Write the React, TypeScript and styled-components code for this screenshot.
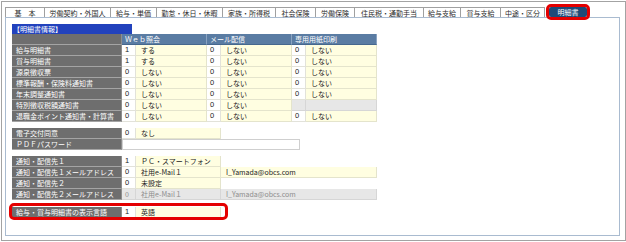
import React from "react";
import styled, { createGlobalStyle, css } from "styled-components";

const GlobalStyle = createGlobalStyle`
	html, body {
		margin: 0;
		padding: 0;
		background: #fff;
	}
	body {
		font-family: "Noto Sans CJK JP", "Noto Sans", sans-serif;
		font-size: 7px;
		color: #222;
	}
`;

const Frame = styled.div`
	box-sizing: border-box;
	width: 625px;
	height: 240px;
	margin: 1px 0 0 1px;
	border: 1px solid #a3a3a3;
	padding: 5px 0 0 3px;
`;

const TabBar = styled.div`
	display: flex;
	height: 10px;
`;

const Tab = styled.div<{ $w: number; $active?: boolean }>`
	box-sizing: border-box;
	width: ${(p) => p.$w}px;
	height: 10px;
	display: flex;
	align-items: center;
	justify-content: center;
	white-space: nowrap;
	color: #2a2a2a;
	background: #fff;
	border-top: 1px solid #a0a0a0;
	border-right: 1px solid #a0a0a0;

	&:first-child {
		border-left: 1px solid #a0a0a0;
	}

	${(p) =>
		p.$active &&
		css`
			margin-left: 4px;
			border: none;
			background: #1f4b78;
			color: #fff;
			border-radius: 2px;
			outline: 3px solid #e40000;
			outline-offset: 0;
		`}
`;

const Panel = styled.div`
	box-sizing: border-box;
	width: 615px;
	height: 219px;
	border: 1px solid #a9bbd0;
	padding: 6px 0 0 6px;
	display: flex;
	flex-direction: column;
	align-items: flex-start;
`;

const Title = styled.div`
	box-sizing: border-box;
	width: 120px;
	height: 10px;
	background: #2242bd;
	color: #fff;
	display: flex;
	align-items: center;
	padding-left: 1px;
`;

const Grid = styled.div<{ $cols: string; $gap?: number }>`
	display: grid;
	grid-template-columns: ${(p) => p.$cols};
	grid-auto-rows: 11px;
	margin-top: ${(p) => p.$gap ?? 0}px;
`;

type Tone = "label" | "head" | "code" | "value" | "off" | "blank" | "input";

const tones: Record<Tone, ReturnType<typeof css>> = {
	label: css`
		background: #6e6e6e;
		color: #fff;
		padding-left: 4px;
		border-bottom: 1px solid #a4a4a4;
		border-right: 1px solid #8e8e8e;
	`,
	head: css`
		background: #5a7ca3;
		color: #fff;
		border-right: 1px solid #8aa3c1;
		border-bottom: 1px solid #45678e;
	`,
	code: css`
		background: #fff;
		color: #222;
		font-family: "Liberation Sans", Arial, sans-serif;
		font-size: 7.5px;
		border-right: 1px solid #e2e2da;
		border-bottom: 1px solid #e2e2da;
	`,
	value: css`
		background: #fffee1;
		color: #222;
		padding-left: 5px;
		border-right: 1px solid #e4e4cc;
		border-bottom: 1px solid #e4e4cc;
	`,
	off: css`
		background: #e7e7e7;
		color: #8d8d8d;
		border-right: 1px solid #d6d6d6;
		border-bottom: 1px solid #d6d6d6;
	`,
	blank: css`
		background: transparent;
	`,
	input: css`
		background: #fff;
		border: 1px solid #cfcfcf;
	`,
};

const Cell = styled.div<{ $tone: Tone; $span?: number; $offValue?: boolean }>`
	box-sizing: border-box;
	grid-column: span ${(p) => p.$span ?? 1};
	display: flex;
	align-items: center;
	padding-left: 3px;
	white-space: nowrap;
	overflow: hidden;
	line-height: 1;
	${(p) => tones[p.$tone]}
	${(p) =>
		p.$offValue &&
		css`
			padding-left: 5px;
		`}
`;

const Highlight = styled.div`
	position: relative;
	margin-top: 7px;

	&::after {
		content: "";
		position: absolute;
		top: -4px;
		bottom: -2px;
		left: -3px;
		right: -7px;
		border: 3px solid #e40000;
		border-radius: 5px;
		pointer-events: none;
	}
`;

type Pair = [number, string] | null;

interface IDoc {
	label: string;
	web: Pair;
	mail: Pair;
	print: Pair;
}

const tabs: { text: string; w: number }[] = [
	{ text: "基　本", w: 40 },
	{ text: "労働契約・外国人", w: 66 },
	{ text: "給与・単価", w: 46 },
	{ text: "勤怠・休日・休暇", w: 66 },
	{ text: "家族・所得税", w: 53 },
	{ text: "社会保険", w: 40 },
	{ text: "労働保険", w: 39 },
	{ text: "住民税・通勤手当", w: 69 },
	{ text: "給与支給", w: 37 },
	{ text: "賞与支給", w: 40 },
	{ text: "中途・区分", w: 44 },
];

const docs: IDoc[] = [
	{ label: "給与明細書", web: [1, "する"], mail: [0, "しない"], print: [0, "しない"] },
	{ label: "賞与明細書", web: [1, "する"], mail: [0, "しない"], print: [0, "しない"] },
	{ label: "源泉徴収票", web: [0, "しない"], mail: [0, "しない"], print: [0, "しない"] },
	{ label: "標準報酬・保険料通知書", web: [0, "しない"], mail: [0, "しない"], print: [0, "しない"] },
	{ label: "年末調整通知書", web: [0, "しない"], mail: [0, "しない"], print: [0, "しない"] },
	{ label: "特別徴収税額通知書", web: [0, "しない"], mail: [0, "しない"], print: null },
	{ label: "退職金ポイント通知書・計算書", web: [0, "しない"], mail: [0, "しない"], print: [0, "しない"] },
];

const PairCells = ({ pair }: { pair: Pair }) => {
	if (!pair) {
		return (
			<>
				<Cell $tone="off" />
				<Cell $tone="off" />
			</>
		);
	}
	return (
		<>
			<Cell $tone="code">{pair[0]}</Cell>
			<Cell $tone="value">{pair[1]}</Cell>
		</>
	);
};

const App = () => {
	return (
		<>
			<GlobalStyle />
			<Frame>
				<TabBar>
					{tabs.map((t) => (
						<Tab key={t.text} $w={t.w}>
							{t.text}
						</Tab>
					))}
					<Tab $w={38} $active>
						明細書
					</Tab>
				</TabBar>
				<Panel>
					<Title>【明細書情報】</Title>
					<Grid $cols="110px 14px 71px 14px 71px 14px 71px">
						<Cell $tone="label" />
						<Cell $tone="head" $span={2}>
							Ｗｅｂ照会
						</Cell>
						<Cell $tone="head" $span={2}>
							メール配信
						</Cell>
						<Cell $tone="head" $span={2}>
							専用用紙印刷
						</Cell>
						{docs.map((d) => (
							<React.Fragment key={d.label}>
								<Cell $tone="label">{d.label}</Cell>
								<PairCells pair={d.web} />
								<PairCells pair={d.mail} />
								<PairCells pair={d.print} />
							</React.Fragment>
						))}
					</Grid>

					<Grid $cols="110px 14px 85px 79px" $gap={6}>
						<Cell $tone="label">電子交付同意</Cell>
						<Cell $tone="code">0</Cell>
						<Cell $tone="value">なし</Cell>
						<Cell $tone="blank" />
						<Cell $tone="label">ＰＤＦパスワード</Cell>
						<Cell $tone="input" $span={3} />
					</Grid>

					<Grid $cols="110px 14px 85px 156px" $gap={6}>
						<Cell $tone="label">通知・配信先１</Cell>
						<Cell $tone="code">1</Cell>
						<Cell $tone="value">ＰＣ・スマートフォン</Cell>
						<Cell $tone="blank" />

						<Cell $tone="label">通知・配信先１メールアドレス</Cell>
						<Cell $tone="code">0</Cell>
						<Cell $tone="value">社用e-Mail１</Cell>
						<Cell $tone="value">I_Yamada@obcs.com</Cell>

						<Cell $tone="label">通知・配信先２</Cell>
						<Cell $tone="code">0</Cell>
						<Cell $tone="value">未設定</Cell>
						<Cell $tone="blank" />

						<Cell $tone="label">通知・配信先２メールアドレス</Cell>
						<Cell $tone="off">0</Cell>
						<Cell $tone="off" $offValue>
							社用e-Mail１
						</Cell>
						<Cell $tone="off" $offValue>
							I_Yamada@obcs.com
						</Cell>
					</Grid>

					<Highlight>
						<Grid $cols="110px 14px 85px">
							<Cell $tone="label">給与・賞与明細書の表示言語</Cell>
							<Cell $tone="code">1</Cell>
							<Cell $tone="value">英語</Cell>
						</Grid>
					</Highlight>
				</Panel>
			</Frame>
		</>
	);
};

export default App;
